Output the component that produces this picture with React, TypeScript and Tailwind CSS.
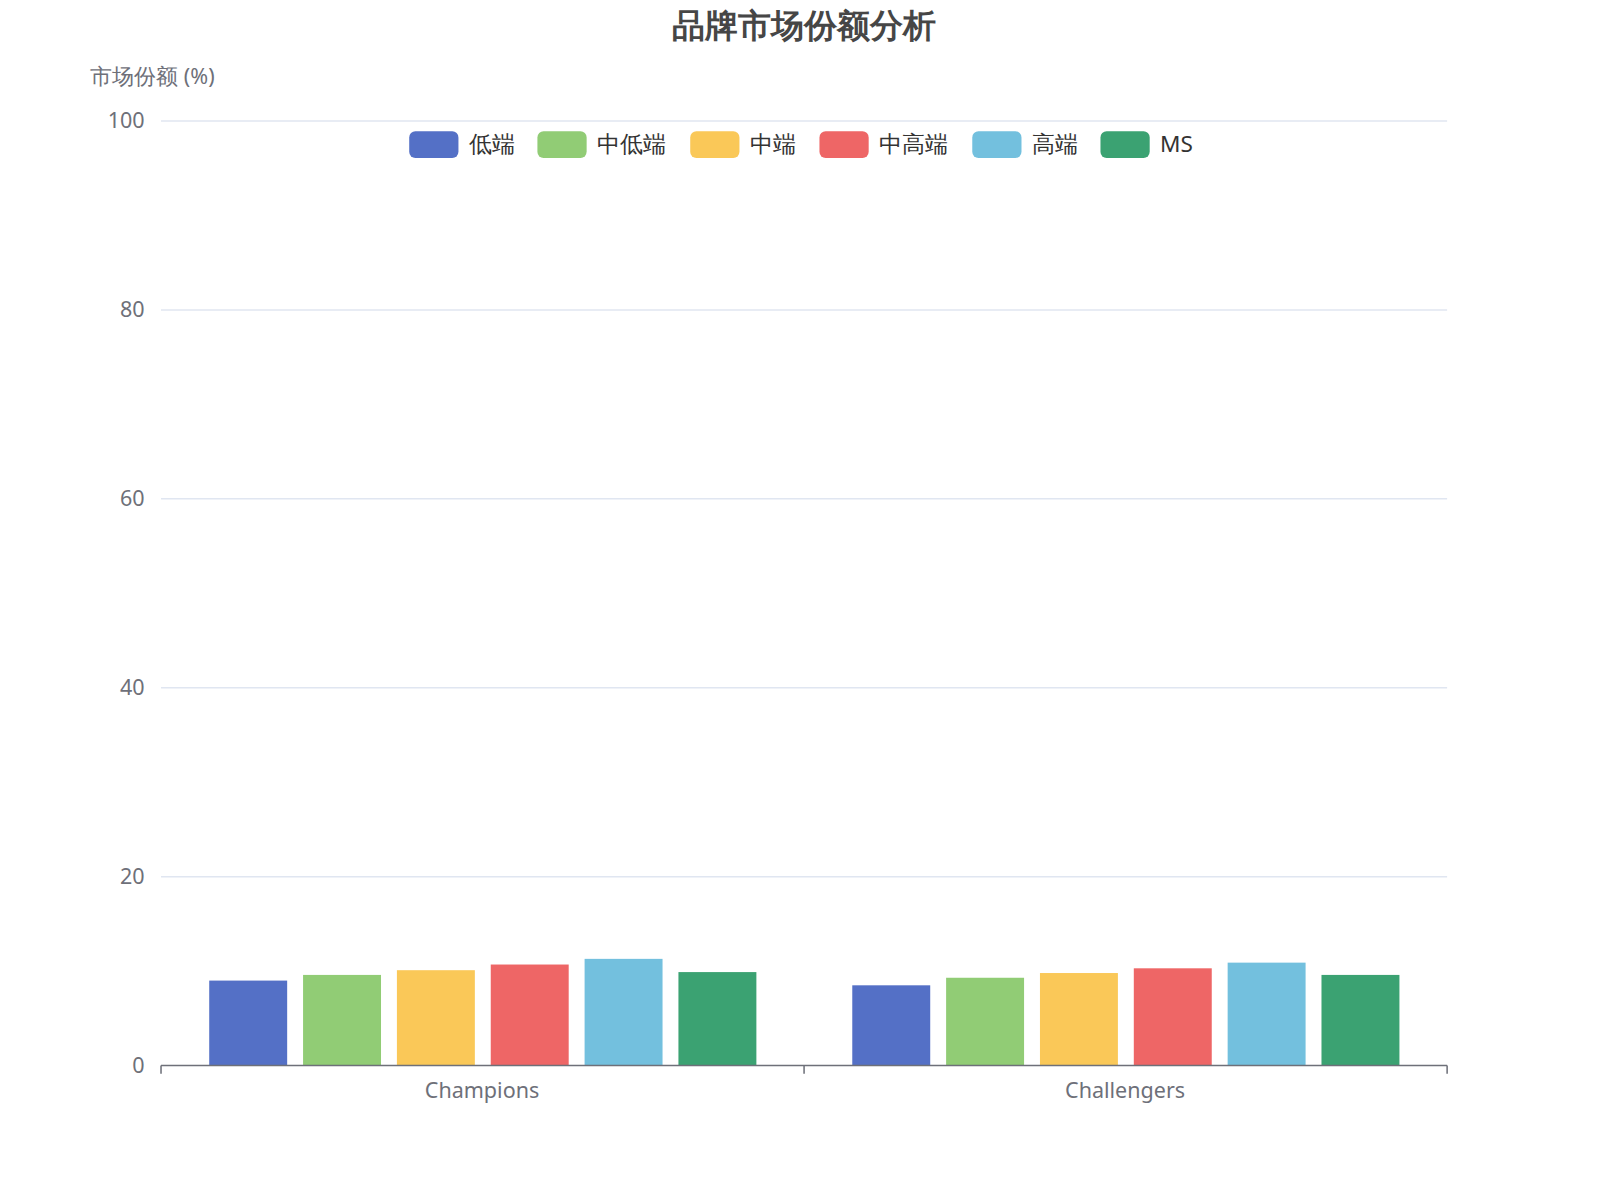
import React from "react";

const colors = ["#5470c6", "#91cc75", "#fac858", "#ee6666", "#73c0de", "#3ba272"];
const legend = [
  { name: "低端", x: 399 },
  { name: "中低端", x: 524 },
  { name: "中端", x: 673 },
  { name: "中高端", x: 799 },
  { name: "高端", x: 948 },
  { name: "MS", x: 1073 },
];
const groups = [
  { name: "Champions", start: 204, values: [9.0, 9.6, 10.1, 10.7, 11.3, 9.9] },
  { name: "Challengers", start: 831, values: [8.5, 9.3, 9.8, 10.3, 10.9, 9.6] },
];

// measured on a 1560-wide view, scaled up to 1600
const y0 = 1039;
const yTop = 118;
const yOf = (v: number) => y0 - ((y0 - yTop) * v) / 100;

export default function App() {
  return (
    <div className="w-[1600px] h-[1200px] bg-white font-['Noto_Sans','Noto_Sans_CJK_SC',sans-serif]">
      <svg width="1600" height="1200">
        <g transform="scale(1.0256)">
          <text x="784" y="36" textAnchor="middle" fontSize="32" fontWeight="700" fill="#464646">
            品牌市场份额分析
          </text>
          <text x="88" y="82" fontSize="21" fill="#6e7079">市场份额 (%)</text>
          {[0, 20, 40, 60, 80, 100].map((v) => (
            <g key={v}>
              {v > 0 && <line x1="157" x2="1411" y1={yOf(v)} y2={yOf(v)} stroke="#e0e6f1" strokeWidth="1.5" />}
              <text x="141" y={yOf(v) + 7} textAnchor="end" fontSize="21" fill="#6e7079">{v}</text>
            </g>
          ))}
          {groups.map((g) =>
            g.values.map((v, i) => (
              <rect key={g.name + i} x={g.start + i * 91.5} y={yOf(v)} width="76" height={y0 - yOf(v)} fill={colors[i]} />
            ))
          )}
          <line x1="157" x2="1411" y1={y0} y2={y0} stroke="#6e7079" strokeWidth="1.5" />
          {[157, 784, 1411].map((x) => (
            <line key={x} x1={x} x2={x} y1={y0} y2={y0 + 8} stroke="#6e7079" strokeWidth="1.5" />
          ))}
          <text x="470" y="1071" textAnchor="middle" fontSize="21" fill="#6e7079">Champions</text>
          <text x="1097" y="1071" textAnchor="middle" fontSize="21" fill="#6e7079">Challengers</text>
          {legend.map((l, i) => (
            <g key={l.name}>
              <rect x={l.x} y="128" width="48" height="26" rx="6" fill={colors[i]} />
              <text x={l.x + 58} y="148" fontSize="22" fill="#333">{l.name}</text>
            </g>
          ))}
        </g>
      </svg>
    </div>
  );
}
